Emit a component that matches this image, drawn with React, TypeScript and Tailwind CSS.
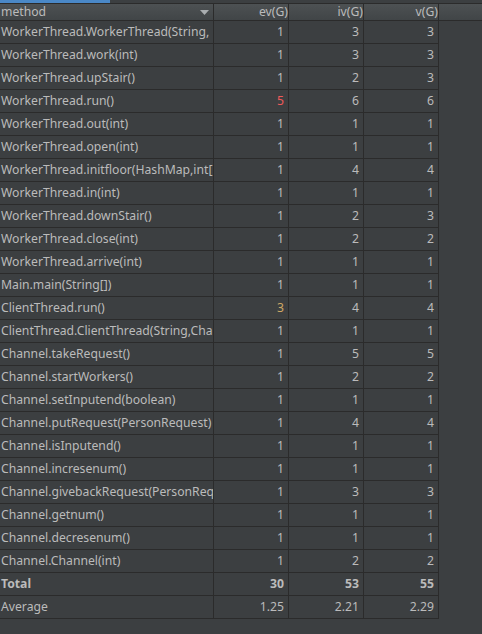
import React from "react";

type Row = { m: string; ev: string; iv: string; v: string; evColor?: string };

const rows: Row[] = [
  { m: "WorkerThread.WorkerThread(String,", ev: "1", iv: "3", v: "3" },
  { m: "WorkerThread.work(int)", ev: "1", iv: "3", v: "3" },
  { m: "WorkerThread.upStair()", ev: "1", iv: "2", v: "3" },
  { m: "WorkerThread.run()", ev: "5", iv: "6", v: "6", evColor: "text-[#f05a5a]" },
  { m: "WorkerThread.out(int)", ev: "1", iv: "1", v: "1" },
  { m: "WorkerThread.open(int)", ev: "1", iv: "1", v: "1" },
  { m: "WorkerThread.initfloor(HashMap,int[", ev: "1", iv: "4", v: "4" },
  { m: "WorkerThread.in(int)", ev: "1", iv: "1", v: "1" },
  { m: "WorkerThread.downStair()", ev: "1", iv: "2", v: "3" },
  { m: "WorkerThread.close(int)", ev: "1", iv: "2", v: "2" },
  { m: "WorkerThread.arrive(int)", ev: "1", iv: "1", v: "1" },
  { m: "Main.main(String[])", ev: "1", iv: "1", v: "1" },
  { m: "ClientThread.run()", ev: "3", iv: "4", v: "4", evColor: "text-[#cfa865]" },
  { m: "ClientThread.ClientThread(String,Cha", ev: "1", iv: "1", v: "1" },
  { m: "Channel.takeRequest()", ev: "1", iv: "5", v: "5" },
  { m: "Channel.startWorkers()", ev: "1", iv: "2", v: "2" },
  { m: "Channel.setInputend(boolean)", ev: "1", iv: "1", v: "1" },
  { m: "Channel.putRequest(PersonRequest)", ev: "1", iv: "4", v: "4" },
  { m: "Channel.isInputend()", ev: "1", iv: "1", v: "1" },
  { m: "Channel.incresenum()", ev: "1", iv: "1", v: "1" },
  { m: "Channel.givebackRequest(PersonReq", ev: "1", iv: "3", v: "3" },
  { m: "Channel.getnum()", ev: "1", iv: "1", v: "1" },
  { m: "Channel.decresenum()", ev: "1", iv: "1", v: "1" },
  { m: "Channel.Channel(int)", ev: "1", iv: "2", v: "2" },
];

function DataRow({ r, bold }: { r: Row; bold?: boolean }) {
  const w = bold ? "font-bold" : "";
  return (
    <div className={`flex h-[23px] w-[439px] border-b border-[#2b2b2b] ${w}`}>
      <div className="w-[214px] shrink-0 border-r border-[#2b2b2b] pl-px overflow-hidden whitespace-nowrap leading-[22px]">
        {r.m}
      </div>
      <div className={`w-[75px] shrink-0 border-r border-[#2b2b2b] pr-[4px] text-right leading-[22px] ${r.evColor ?? ""}`}>
        {r.ev}
      </div>
      <div className="w-[75px] shrink-0 border-r border-[#2b2b2b] pr-[4px] text-right leading-[22px]">{r.iv}</div>
      <div className="w-[75px] shrink-0 border-r border-[#2b2b2b] pr-[4px] text-right leading-[22px]">{r.v}</div>
    </div>
  );
}

export default function App() {
  return (
    <div
      className="w-[482px] h-[634px] bg-[#3c3f41] text-[#bbbbbb] text-[12.2px] overflow-hidden"
      style={{ fontFamily: '"Noto Sans", "Open Sans", sans-serif' }}
    >
      <div className="flex h-[3px]">
        <div className="w-[110px] bg-[#4a88c7]" />
        <div className="flex-1 bg-[#3c3f41]" />
      </div>
      <div className="h-px bg-[#2b2b2b]" />
      <div className="flex h-[17px] border-b border-[#2b2b2b] bg-gradient-to-b from-[#4d5153] to-[#414547]">
        <div className="relative w-[214px] shrink-0 border-r border-[#2b2b2b] pl-px leading-[16px]">
          method
          <svg className="absolute right-[4px] top-[6px]" width="9" height="5" viewBox="0 0 9 5">
            <path d="M0 0H9L4.5 5Z" fill="#a9adb0" />
          </svg>
        </div>
        <div className="w-[75px] shrink-0 border-r border-[#2b2b2b] text-right leading-[16px]">ev(G)</div>
        <div className="w-[75px] shrink-0 border-r border-[#2b2b2b] text-right leading-[16px]">iv(G)</div>
        <div className="w-[75px] shrink-0 border-r border-[#2b2b2b] text-right leading-[16px]">v(G)</div>
        <div className="flex-1" />
      </div>
      {rows.map((r, i) => (
        <DataRow key={i} r={r} />
      ))}
      <DataRow r={{ m: "Total", ev: "30", iv: "53", v: "55" }} bold />
      <DataRow r={{ m: "Average", ev: "1.25", iv: "2.21", v: "2.29" }} />
    </div>
  );
}
